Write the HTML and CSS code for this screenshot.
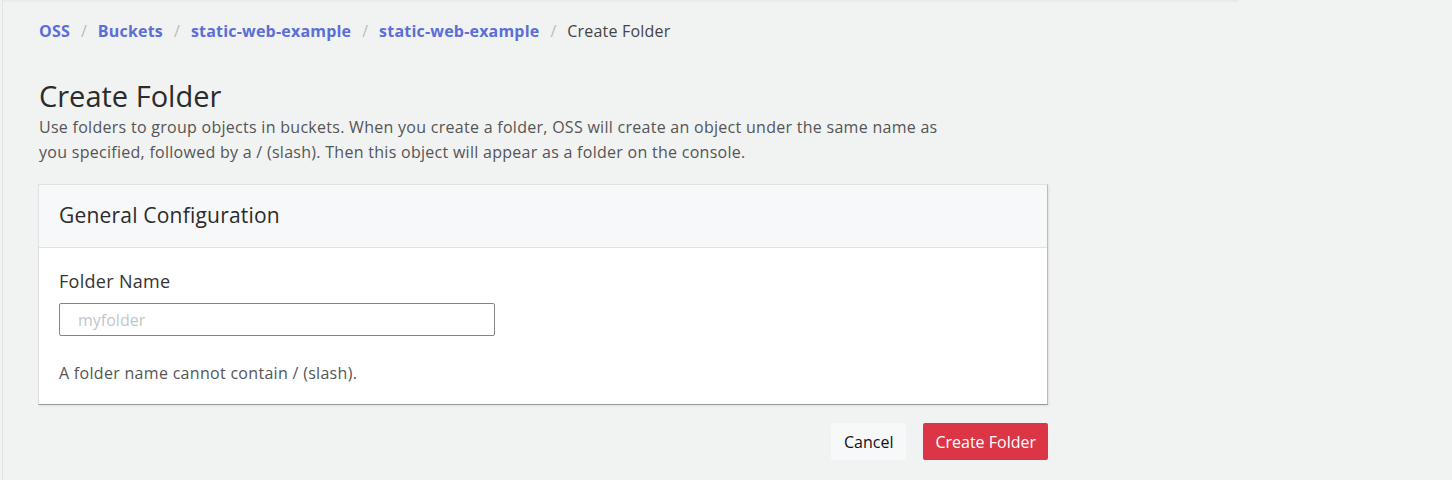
FILE: index.html
```html
<!DOCTYPE html>
<html>
<head>
<meta charset="utf-8">
<link rel="stylesheet" href="styles.css">
</head>
<body>
<div class="frame">
  <div class="topline"></div>
  <main class="page">
    <nav class="crumbs">
      <a class="crumb-link">OSS</a><span class="sep">/</span>
      <a class="crumb-link">Buckets</a><span class="sep">/</span>
      <a class="crumb-link">static-web-example</a><span class="sep">/</span>
      <a class="crumb-link">static-web-example</a><span class="sep">/</span>
      <span class="crumb-current">Create Folder</span>
    </nav>
    <h1 class="title">Create Folder</h1>
    <p class="desc">Use folders to group objects in buckets. When you create a folder, OSS will create an object under the same name as<br>you specified, followed by a / (slash). Then this object will appear as a folder on the console.</p>
    <section class="card">
      <header class="card-head">General Configuration</header>
      <div class="card-body">
        <label class="label">Folder Name</label>
        <input class="input" type="text" placeholder="myfolder">
        <p class="help">A folder name cannot contain / (slash).</p>
      </div>
    </section>
    <div class="actions">
      <button class="btn btn-cancel">Cancel</button>
      <button class="btn btn-primary">Create Folder</button>
    </div>
  </main>
</div>
</body>
</html>
```

FILE: styles.css
```css
html, body {
  margin: 0;
  padding: 0;
  background: #f1f2f2;
  height: 100%;
}
body {
  font-family: "Open Sans", "Noto Sans", sans-serif;
  color: #333;
}
.frame {
  margin-left: 2px;
  border-left: 1px solid #e2e3e3;
  min-height: 480px;
  box-sizing: border-box;
}
.topline {
  width: 1235px;
  height: 3px;
  background: linear-gradient(#e6e7e7, #f1f2f2);
}
.page {
  padding-left: 35px;
  width: 1010px;
}
.crumbs {
  display: flex;
  align-items: center;
  height: 22px;
  margin-top: 17px;
  padding-left: 1px;
  font-size: 16px;
}
.crumb-link {
  color: #5a6fd8;
  font-weight: 700;
  letter-spacing: 0.2px;
}
.sep {
  color: #bbb;
  margin: 0 11px;
}
.crumb-current {
  color: #444;
  letter-spacing: 0.2px;
}
.title {
  margin: 36px 0 0 1px;
  font-size: 29px;
  font-weight: 400;
  line-height: 36px;
  color: #2b2b2b;
}
.desc {
  margin: 1px 0 0 1px;
  font-size: 16px;
  letter-spacing: 0.28px;
  line-height: 25px;
  color: #555;
}
.card {
  margin-top: 19px;
  background: #fff;
  border: 1px solid #dfe1e3;
  border-right-color: #b8bebe;
  border-bottom-color: #8e9c9c;
  box-shadow: 1px 1px 2px rgba(0,0,0,0.08);
}
.card-head {
  height: 63px;
  box-sizing: border-box;
  padding: 0 20px 2px;
  display: flex;
  align-items: center;
  background: #f7f8fa;
  border-bottom: 1px solid #dfe2e5;
  font-size: 21px;
  letter-spacing: 0.2px;
  color: #2b2b2b;
}
.card-body {
  padding: 20px 20px 20px;
  display: flex;
  flex-direction: column;
  align-items: flex-start;
}
.label {
  font-size: 18px;
  letter-spacing: 0.3px;
  line-height: 26px;
  color: #333;
}
.input {
  margin-top: 9px;
  width: 436px;
  height: 33px;
  box-sizing: border-box;
  border: 1px solid #858585;
  border-radius: 2px;
  padding: 0 18px;
  font-family: inherit;
  font-size: 16px;
  background: #fff;
}
.input::placeholder {
  color: #c2c6cc;
}
.help {
  margin: 26px 0 0;
  font-size: 16px;
  letter-spacing: 0.3px;
  line-height: 22px;
  color: #555;
}
.actions {
  display: flex;
  justify-content: flex-end;
  gap: 17px;
  margin-top: 18px;
}
.btn {
  height: 37px;
  border: none;
  border-radius: 2px;
  font-family: inherit;
  font-size: 16px;
  padding: 0 12px;
}
.btn-cancel {
  background: #f7f8fa;
  color: #111;
  padding: 0 13px;
}
.btn-primary {
  background: #dc3545;
  color: #fff;
}
```
